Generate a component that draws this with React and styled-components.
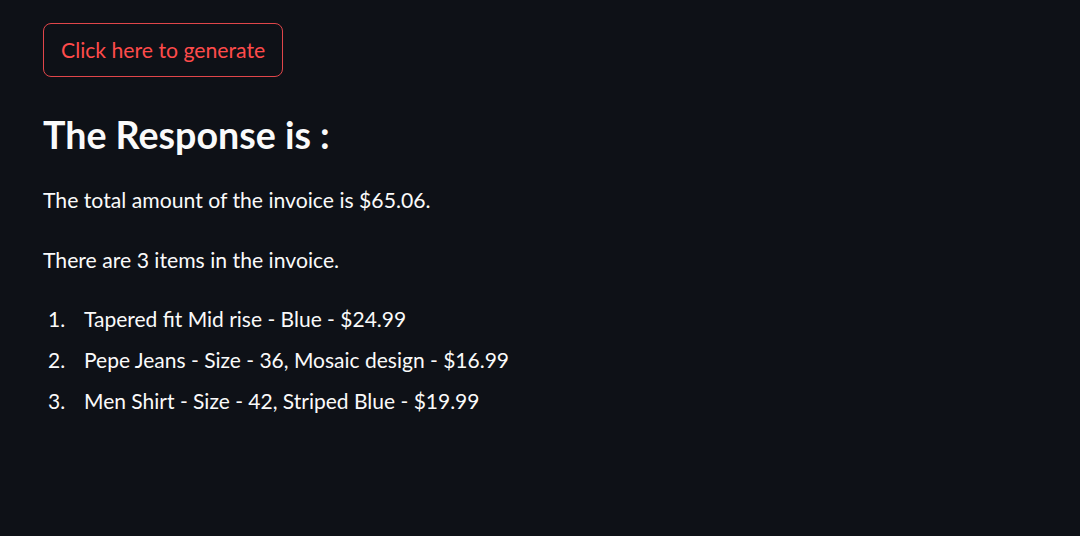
import React from "react";
import styled, { createGlobalStyle } from "styled-components";

const GlobalStyle = createGlobalStyle`
  html, body {
    margin: 0;
    padding: 0;
    background: #0e1117;
  }
  body {
    font-family: "Lato", "Noto Sans", sans-serif;
    color: #fafafa;
  }
`;

const items = [
  "Tapered fit Mid rise - Blue - $24.99",
  "Pepe Jeans - Size - 36, Mosaic design - $16.99",
  "Men Shirt - Size - 42, Striped Blue - $19.99",
];

const App = () => {
  return (
    <>
      <GlobalStyle />
      <Page>
        <GenerateButton>Click here to generate</GenerateButton>
        <Heading>The Response is :</Heading>
        <Para>The total amount of the invoice is $65.06.</Para>
        <Para>There are 3 items in the invoice.</Para>
        <List>
          {items.map((item, i) => (
            <Item key={i}>
              <Num>{i + 1}.</Num>
              <span>{item}</span>
            </Item>
          ))}
        </List>
      </Page>
    </>
  );
};

export default App;

const Page = styled.div`
  display: flex;
  flex-direction: column;
  align-items: flex-start;
  padding: 23px 43px;
  min-height: 536px;
  box-sizing: border-box;
`;

const GenerateButton = styled.button`
  height: 54px;
  padding: 0 17px;
  border: 1px solid #e0464a;
  border-radius: 8px;
  background: transparent;
  color: #ff4b4b;
  font-family: inherit;
  font-size: 21.2px;
  cursor: pointer;
`;

const Heading = styled.h2`
  margin: 33px 0 0;
  font-size: 37.6px;
  font-weight: 700;
  line-height: 50px;
`;

const Para = styled.p`
  margin: 0;
  font-size: 21.2px;
  line-height: 30px;
  &:nth-of-type(1) {
    margin-top: 25px;
  }
  &:nth-of-type(2) {
    margin-top: 30px;
  }
`;

const List = styled.ol`
  list-style: none;
  margin: 28px 0 0;
  padding: 0;
  display: flex;
  flex-direction: column;
  gap: 10px;
`;

const Item = styled.li`
  display: flex;
  font-size: 21px;
  line-height: 31px;
`;

const Num = styled.span`
  width: 41px;
  padding-left: 5px;
  box-sizing: border-box;
`;
